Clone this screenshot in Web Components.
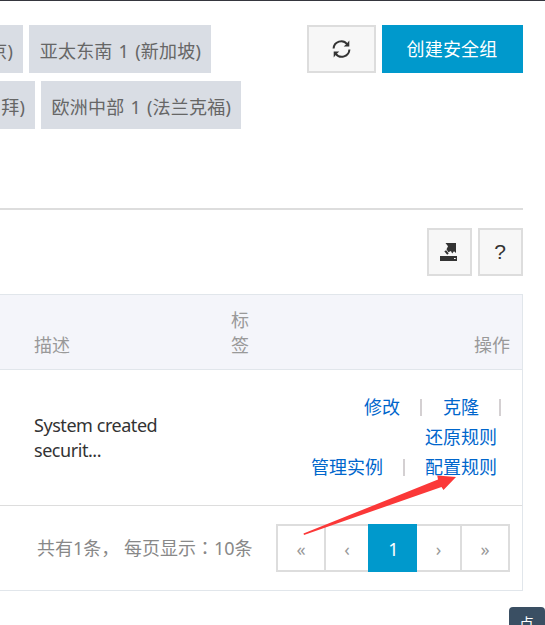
<!DOCTYPE html>
<html lang="zh-CN">
<head>
<meta charset="utf-8">
<title>安全组列表</title>
<style>
html,body{margin:0;height:625px;overflow:hidden;background:#fff}
body{font:18px/25px "Noto Sans","Noto Sans CJK SC",sans-serif;color:#333}
</style>
</head>
<body>
<security-console></security-console>
<script>
const define = (name, html) => {
  const t = document.createElement('template');
  t.innerHTML = html;
  customElements.define(name, class extends HTMLElement {
    constructor() {
      super();
      this.attachShadow({mode: 'open'}).append(t.content.cloneNode(true));
    }
  });
};

define('region-tag', `<style>
:host{display:flex;justify-content:flex-end;align-items:center;box-sizing:border-box;height:48px;width:var(--w);padding:5px 10px 0 0;background:#d9dde4;color:#666;overflow:hidden;white-space:nowrap;letter-spacing:.2px;word-spacing:1.2px;flex:none}
</style><span><slot></slot></span>`);

define('ui-button', `<style>
:host{display:flex;align-items:center;justify-content:center;box-sizing:border-box;width:var(--w);height:48px;border:2px solid #ddd;background:#f7f7f7;color:#333;flex:none}
:host([primary]){background:#09c;border-color:#09c;color:#fff;padding:1px 1px 0 0;letter-spacing:.2px}
</style><slot></slot>`);

define('icon-refresh', `<style>:host,svg{display:block}</style>
<svg width="19" height="18" viewBox="0 0 18 18"><g fill="none" stroke="#333" stroke-width="2"><path d="M1.1 8.5A7.6 7.6 0 0 1 14.7 4.2"/><path d="M16.9 9.5A7.6 7.6 0 0 1 3.3 13.8"/></g><path fill="#333" d="M16.8 .6V6.4H11.2L13.4 4.5 15 2.8ZM1.2 17.4V11.6H6.8L4.6 13.5 3 15.2Z"/></svg>`);

define('icon-export', `<style>:host{display:block;margin-right:2px}svg{display:block}</style>
<svg width="18" height="19" viewBox="0 0 18 19"><g fill="#333"><path d="M5.5 0H16V10L14 8.3 12.2 10.4 10.9 8 8.4 9.3 6.5 6.2 8 3.3Z"/><path d="M4.3 8.2L6.2 7.2 8.7 10.4 7.2 11.8Z"/><path d="M0 13H17V18H0Z"/></g><path d="M14 15H15.7V16H14Z" fill="#fff"/></svg>`);

define('action-links', `<style>
:host{display:flex;flex-direction:column;align-items:flex-end;color:#06c;line-height:30px;white-space:nowrap;margin-top:-1px}
div{display:flex;justify-content:flex-end;align-items:center;height:30px;padding-right:13px}
div.wide{padding-right:9px}
i{width:2px;height:17px;background:#d4d0d2;margin:0 21px 0 20px}
.wide i:last-child{margin-right:0}
div:last-child i{margin:0 20px}
</style>
<div class="wide"><span>修改</span><i></i><span>克隆</span><i></i></div>
<div><span>还原规则</span></div>
<div><span>管理实例</span><i></i><span>配置规则</span></div>`);

define('page-nav', `<style>
:host{display:grid;grid-template-columns:48px 44px 49px 43px 50px;height:48px;width:234px;box-sizing:border-box}
span{display:flex;align-items:center;justify-content:center;border:2px solid #ddd;border-right:0;box-sizing:border-box;color:#999;padding-top:3px}
span:last-child{border-right:2px solid #ddd}
.on{background:#09c;border-color:#09c;color:#fff}
.on+span{border-left:0}
</style><span>«</span><span>‹</span><span class="on">1</span><span>›</span><span>»</span>`);

define('group-table', `<style>
:host{display:block;box-sizing:border-box;width:523px;height:297px;border:1px solid #e1e6eb;border-left:0}
.row{display:grid;grid-template-columns:231px 19px 1fr;box-sizing:border-box}
.head{height:75px;background:#f4f5fa;border-bottom:1px solid #e1e6eb;color:#999;align-items:end;padding:0 12px 11px 0}
.desc{padding-left:34px}.ops{text-align:right}
.data{height:136px;border-bottom:1px solid #ddd;align-items:center;padding-right:12px}
.data .desc{letter-spacing:-.45px;padding-top:1px}
.foot{display:flex;justify-content:space-between;align-items:center;height:84px;padding:0 12px 0 37px;color:#888;white-space:nowrap}
.colon{font-family:"Noto Sans CJK TC",sans-serif}
</style>
<div class="row head"><span class="desc">描述</span><span>标<br>签</span><span class="ops">操作</span></div>
<div class="row data"><span class="desc">System created<br>securit...</span><span></span><action-links></action-links></div>
<div class="foot"><span>共有1条， 每页显示<span class="colon" lang="zh-TW">：</span>10条</span><page-nav></page-nav></div>`);

define('pointer-arrow', `<style>:host{position:absolute;left:0;top:-1px;pointer-events:none}svg{display:block}</style>
<svg width="545" height="625"><path fill="#fb3838" d="M303.5 533.5L438 479.5 437.2 475.5 456 477 443.5 490 441.5 487 304 535Z"/></svg>`);

define('chat-tab', `<style>:host{position:absolute;left:509px;top:606px;width:36px;height:24px;box-sizing:border-box;padding:7px 0 0 10px;border-radius:4px;background:#3a4f63;color:#fff;font-size:15px;line-height:18px}</style><slot></slot>`);

define('security-console', `<style>
:host{display:block;position:relative;width:545px;height:625px;overflow:hidden;box-sizing:border-box;border-top:1px solid #35363e}
.top{display:flex;justify-content:space-between;width:523px;height:185px;margin-top:24px;border-bottom:2px solid #ddd;box-sizing:border-box}
.regions{display:flex;flex-direction:column;gap:8px}
.line{display:flex;gap:6px}
.tools{display:flex;gap:6px;justify-content:flex-end;width:523px;padding:18px 0}
.q{font:21px/25px "Liberation Sans",sans-serif;padding:0 1px 1px 0}
</style>
<div class="top">
 <div class="regions">
  <div class="line"><region-tag style="--w:23px">京)</region-tag><region-tag style="--w:182px">亚太东南 1 (新加坡)</region-tag></div>
  <div class="line"><region-tag style="--w:35px">拜)</region-tag><region-tag style="--w:200px">欧洲中部 1 (法兰克福)</region-tag></div>
 </div>
 <div class="line"><ui-button style="--w:69px"><icon-refresh></icon-refresh></ui-button><ui-button primary style="--w:141px">创建安全组</ui-button></div>
</div>
<div class="tools"><ui-button style="--w:45px"><icon-export></icon-export></ui-button><ui-button style="--w:45px"><span class="q">?</span></ui-button></div>
<group-table></group-table>
<pointer-arrow></pointer-arrow>
<chat-tab>点</chat-tab>`);
</script>
</body>
</html>
